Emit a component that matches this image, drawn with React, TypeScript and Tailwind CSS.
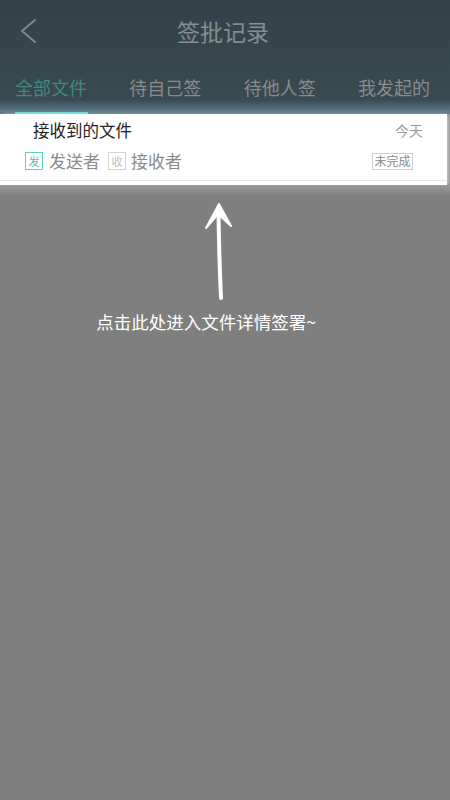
const FONT = { fontFamily: '"Noto Sans CJK SC", "Noto Sans", sans-serif' };

const TABS = ["全部文件", "待自己签", "待他人签", "我发起的"];

export default function App() {
  return (
    <div className="relative flex h-[800px] w-[450px] flex-col overflow-hidden bg-[#7f7f7f]" style={FONT}>
      {/* dimmed header */}
      <div className="bg-gradient-to-b from-[#33424a] via-[#36464d] to-[#3a4b53]">
        <div className="flex h-[64px] items-center px-[18px] pb-[2px]">
          <svg width="22" height="26" viewBox="0 0 22 26" className="shrink-0">
            <path d="M17 2 L4 13 L17 24" fill="none" stroke="#7f888c" strokeWidth="2" strokeLinecap="round" />
          </svg>
          <div className="flex-1 pr-[26px] text-center text-[23px] leading-none text-[#858d91]">签批记录</div>
        </div>
        <div className="flex h-[36px] items-start justify-between pl-[15px] pr-[20px] pt-[14px] text-[18px] leading-none text-[#878c8e]">
          {TABS.map((t, i) => (
            <span key={t} className={i === 0 ? "text-[#3f8a7e]" : ""}>{t}</span>
          ))}
        </div>
        <div className="h-[12px] bg-gradient-to-b from-[#3a4b53] to-[#5a7c8d]" />
        <div className="h-[2px] bg-[#4b6d7e] pl-[15px]">
          <div className="h-[2px] w-[73px] bg-[#58d4cc]" />
        </div>
      </div>

      {/* highlighted card */}
      <div className="mr-[3px] bg-white shadow-[2px_0_4px_rgba(255,255,255,0.6)]">
        <div className="flex items-center justify-between pl-[33px] pr-[24px] pt-[4px]">
          <span className="text-[16.5px] leading-[24px] text-[#222]">接收到的文件</span>
          <span className="text-[14px] text-[#999]">今天</span>
        </div>
        <div className="flex items-center pl-[25px] pr-[34px] pt-[7px] pb-[7px]">
          <span className="flex h-[18px] w-[18px] items-center justify-center border border-[#5ed2c5] text-[11px] leading-none text-[#49c1b3]">发</span>
          <span className="ml-[6px] text-[17px] leading-[24px] text-[#8a8a8a]">发送者</span>
          <span className="ml-[8px] flex h-[18px] w-[18px] items-center justify-center border border-[#d3d3d3] text-[11px] leading-none text-[#c0c0c0]">收</span>
          <span className="ml-[5px] text-[17px] leading-[24px] text-[#8a8a8a]">接收者</span>
          <span className="ml-auto flex h-[17px] w-[41px] items-center justify-center border border-[#cfcfcf] text-[12px] leading-none text-[#888]">未完成</span>
        </div>
        <div className="h-px bg-[#e4e4e4]" />
        <div className="h-[4px]" />
      </div>
      <div className="h-[12px] bg-gradient-to-b from-[#9a9a9a] to-[#7f7f7f]" />

      {/* arrow + hint */}
      <div className="flex flex-col items-center pr-[24px]">
        <svg width="50" height="110" viewBox="0 0 50 110" className="mt-[3px] ml-[12px]">
          <path d="M25 4 L12 28 L24 14 L37 26 Z" fill="#fff" stroke="#fff" strokeWidth="2" strokeLinejoin="round" />
          <path d="M24.5 10 Q25 55 27 98" fill="none" stroke="#fff" strokeWidth="4" strokeLinecap="round" />
        </svg>
        <div className="mt-[3px] -ml-[14px] text-[17.5px] leading-none text-white">点击此处进入文件详情签署~</div>
      </div>
    </div>
  );
}
